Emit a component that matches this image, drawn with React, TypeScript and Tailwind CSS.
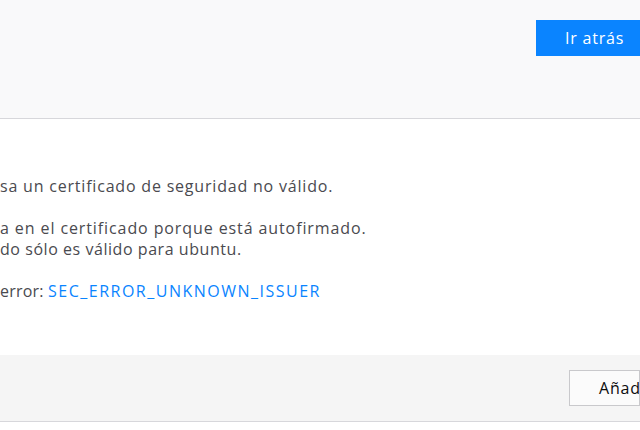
import React from 'react';

const App: React.FC = () => {
  return (
    <div className="w-[640px] h-[430px] overflow-hidden bg-white font-['Open_Sans',sans-serif] text-[16px] tracking-[0.8px] text-[#4a4a4f]">
      {/* cabecera con el botón de volver */}
      <div className="h-[119px] bg-[#f9f9fa] border-b border-[#d7d7db] pt-[20px] flex justify-end">
        <button className="h-[36px] w-[104px] bg-[#0a84ff] text-white pl-[29px] text-left whitespace-nowrap overflow-hidden">
          Ir atrás
        </button>
      </div>

      {/* detalles del error */}
      <div className="h-[236px] pt-[57px] leading-[21px] whitespace-nowrap">
        <p>sa un certificado de seguridad no válido.</p>
        <p className="mt-[21px] tracking-[0.9px]">a en el certificado porque está autofirmado.</p>
        <p className="tracking-[0.55px]">do sólo es válido para ubuntu.</p>
        <p className="mt-[21px] tracking-[0.2px]">
          error:&nbsp;<a href="#" className="text-[#0a84ff] tracking-[1.5px]">SEC_ERROR_UNKNOWN_ISSUER</a>
        </p>
      </div>

      {/* pie con el botón de excepción */}
      <div className="h-[67px] bg-[#f5f5f5] border-b border-[#d7d7db] pt-[15px] flex justify-end">
        <button className="h-[36px] w-[71px] bg-[#fbfbfb] border border-[#c9c9cc] text-[#0c0c0d] pl-[29px] text-left whitespace-nowrap overflow-hidden">
          Añadir excepción...
        </button>
      </div>
    </div>
  );
};

export default App;
